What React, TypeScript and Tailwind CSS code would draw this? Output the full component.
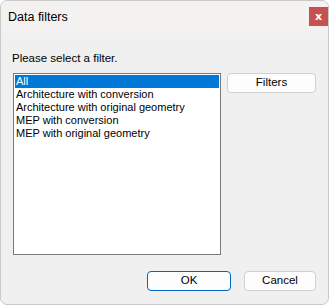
import { useState } from 'react';

const filters = [
    'All',
    'Architecture with conversion',
    'Architecture with original geometry',
    'MEP with conversion',
    'MEP with original geometry',
];

export default function App() {
    const [selected, setSelected] = useState(0);

    return (
        <div className="w-[330px] h-[306px] bg-white" style={{ fontFamily: '"Liberation Sans", Arial, sans-serif' }}>
            <div className="w-[329px] h-[305px] flex flex-col border border-[#c9c9c9] rounded-[7px] overflow-hidden bg-[#f0f0f0] text-black">
                {/* Title bar */}
                <div className="h-[32px] shrink-0 flex items-center justify-between bg-[#f3f2f1] pl-[7px]">
                    <span className="text-[12.5px] leading-none">Data filters</span>
                    <button className="w-[19px] h-[19px] mt-[-2px] flex items-center justify-center bg-[#c75050] text-white text-[11px] font-bold leading-none" style={{ fontFamily: '"DejaVu Sans", sans-serif' }}>
                        x
                    </button>
                </div>

                {/* Body */}
                <div className="flex-1 flex flex-col pl-[11px] pr-[12px] pt-[17px] text-[11.5px]">
                    <p className="leading-[16px] h-[23px]">Please select a filter.</p>
                    <div className="flex gap-[6px]">
                        <ul className="w-[208px] h-[182px] border border-[#7a7a7a] bg-white p-[1px] ml-[1px] text-[11px]">
                            {filters.map((f, i) => (
                                <li
                                    key={f}
                                    onClick={() => setSelected(i)}
                                    className={i === selected
                                        ? 'h-[13px] leading-[13px] pl-[1px] bg-[#0078d7] text-white'
                                        : 'h-[13px] leading-[13px] pl-[1px]'}
                                >
                                    {f}
                                </li>
                            ))}
                        </ul>
                        <button className="w-[89px] h-[20px] rounded-[4px] border border-[#d0d0d0] bg-[#fdfdfd] text-[11.5px] leading-none">
                            Filters
                        </button>
                    </div>
                    <div className="flex justify-end gap-[13px] mt-[16px]">
                        <button className="w-[84px] h-[20px] rounded-[4px] border border-[#0067c0] bg-[#fdfdfd] text-[11.5px] leading-none">
                            OK
                        </button>
                        <button className="w-[72px] h-[20px] rounded-[4px] border border-[#d0d0d0] bg-[#fdfdfd] text-[11.5px] leading-none">
                            Cancel
                        </button>
                    </div>
                </div>
            </div>
        </div>
    );
}
